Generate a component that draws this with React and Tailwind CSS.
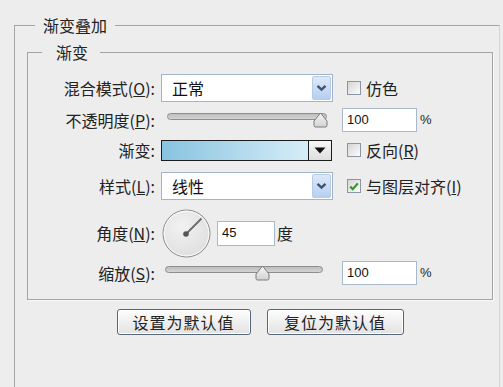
import React from "react";

const CJK = { fontFamily: '"Noto Sans CJK SC", "Noto Sans", sans-serif' };

function Label({ children }) {
  return (
    <div className="w-[127px] shrink-0 text-right text-[16px] leading-[20px] text-[#222]">
      {children}
    </div>
  );
}

function Select({ value }) {
  return (
    <div className="ml-[6px] flex h-[28px] w-[172px] items-center border border-[#a3b4c9] bg-white">
      <div className="flex-1 pl-[10px] text-[16px] leading-[20px] text-[#111]">{value}</div>
      <div className="mr-[1px] flex h-[24px] w-[19px] items-center justify-center rounded-[2px] border border-[#b6cbe6] bg-gradient-to-b from-[#dde9f9] to-[#b7cfef]">
        <svg width="11" height="8" viewBox="0 0 11 8">
          <path d="M1.5 1.8 L5.5 5.6 L9.5 1.8" fill="none" stroke="#3d5477" strokeWidth="2.4" />
        </svg>
      </div>
    </div>
  );
}

function Checkbox({ checked, children, ml = "ml-[14px]" }) {
  return (
    <div className={`${ml} flex items-center`}>
      <div className="flex h-[14px] w-[14px] items-center justify-center border border-[#8a96a6] bg-gradient-to-br from-[#d6d6d6] to-[#fbfbfb]">
        {checked && (
          <svg width="10" height="9" viewBox="0 0 10 9">
            <path d="M1.2 4.6 L3.8 7.2 L8.8 1.4" fill="none" stroke="#2f9a2a" strokeWidth="2.2" />
          </svg>
        )}
      </div>
      <span className="ml-[5px] text-[16px] leading-[20px] text-[#222]">{children}</span>
    </div>
  );
}

function Slider({ ml, width, thumb }) {
  return (
    <div className={`${ml} relative h-[16px] shrink-0`} style={{ width }}>
      <div className="absolute left-0 right-0 top-[1px] h-[7px] rounded-full border border-[#8e8e8e] bg-gradient-to-b from-[#bdbdbd] to-[#d4d4d4]" />
      <svg className="absolute top-0" style={{ left: thumb }} width="15" height="16" viewBox="0 0 15 16">
        <defs>
          <linearGradient id="tg" x1="0" y1="0" x2="0" y2="1">
            <stop offset="0" stopColor="#f6f6f6" />
            <stop offset="1" stopColor="#d2d2d2" />
          </linearGradient>
        </defs>
        <path d="M7.5 1 L14 9 L14 13.5 Q14 15 12.5 15 L2.5 15 Q1 15 1 13.5 L1 9 Z" fill="url(#tg)" stroke="#7c7c7c" strokeWidth="1" />
      </svg>
    </div>
  );
}

function NumInput({ ml, w, h, value }) {
  return (
    <div
      className={`${ml} ${w} ${h} flex shrink-0 items-center border border-[#a9b9cc] bg-white pl-[4px] text-[13px] text-[#111]`}
      style={{ fontFamily: '"Liberation Sans", Arial, sans-serif' }}
    >
      {value}
    </div>
  );
}

function Pct() {
  return (
    <span className="ml-[3px] text-[13px] text-[#222]" style={{ fontFamily: '"Liberation Sans", Arial, sans-serif' }}>
      %
    </span>
  );
}

export default function App() {
  return (
    <div className="h-[387px] w-[503px] overflow-hidden bg-[#ededed]" style={CJK}>
      <fieldset className="ml-[14px] mt-[15px] h-[420px] w-[486px] border-l border-r border-t border-l-[#a4a4a4] border-r-[#d4d4d4] border-t-[#a4a4a4]">
        <legend className="ml-[20px] px-[8px] text-[16px] leading-[20px] text-[#222]">渐变叠加</legend>

        <fieldset className="ml-[12px] mt-[7px] h-[258px] w-[466px] border border-[#a4a4a4] shadow-[1px_1px_0_#fafafa]">
          <legend className="ml-[14px] pl-[14px] pr-[12px] text-[16px] leading-[20px] text-[#222]">渐变</legend>

          <div className="flex flex-col pt-[12px]">
            {/* Row 1 */}
            <div className="flex h-[28px] items-center">
              <Label>混合模式(<u>O</u>):</Label>
              <Select value="正常" />
              <Checkbox>仿色</Checkbox>
            </div>

            {/* Row 2 */}
            <div className="mt-[2px] flex h-[32px] items-center">
              <Label>不透明度(<u>P</u>):</Label>
              <Slider ml="ml-[12px]" width="160px" thumb="146px" />
              <NumInput ml="ml-[15px]" w="w-[75px]" h="h-[24px]" value="100" />
              <Pct />
            </div>

            {/* Row 3 */}
            <div className="flex h-[28px] items-center">
              <Label>渐变:</Label>
              <div className="ml-[6px] flex h-[21px] w-[171px] border border-[#1c1c1c]">
                <div className="flex-1 bg-gradient-to-r from-[#88c3e0] to-[#d6edf8]" />
                <div className="flex w-[23px] items-center justify-center border-l border-[#1c1c1c] bg-gradient-to-b from-[#f7f7f7] to-[#dedede]">
                  <svg width="12" height="7" viewBox="0 0 12 7">
                    <path d="M0.5 0.5 L11.5 0.5 L6 6.5 Z" fill="#111" />
                  </svg>
                </div>
              </div>
              <Checkbox ml="ml-[15px]">
                反向(<u>R</u>)
              </Checkbox>
            </div>

            {/* Row 4 */}
            <div className="flex h-[44px] items-center">
              <Label>样式(<u>L</u>):</Label>
              <Select value="线性" />
              <Checkbox checked>
                与图层对齐(<u>I</u>)
              </Checkbox>
            </div>

            {/* Row 5 */}
            <div className="flex h-[50px] items-center">
              <Label>角度(<u>N</u>):</Label>
              <svg className="ml-[7px] shrink-0" width="49" height="49" viewBox="0 0 49 49">
                <defs>
                  <radialGradient id="cg" cx="0.4" cy="0.35" r="0.7">
                    <stop offset="0" stopColor="#f2f2f2" />
                    <stop offset="1" stopColor="#dedede" />
                  </radialGradient>
                </defs>
                <circle cx="24.5" cy="24.5" r="23.5" fill="url(#cg)" stroke="#8c8c8c" strokeWidth="1" />
                <circle cx="24.5" cy="24.5" r="22.3" fill="none" stroke="#fbfbfb" strokeWidth="1" />
                <line x1="24" y1="25" x2="39.5" y2="9.5" stroke="#6a6a6a" strokeWidth="1.8" />
                <circle cx="24" cy="25" r="2.8" fill="#555" />
              </svg>
              <NumInput ml="ml-[6px]" w="w-[58px]" h="h-[25px]" value="45" />
              <span className="ml-[2px] text-[16px] leading-[20px] text-[#222]">度</span>
            </div>

            {/* Row 6 */}
            <div className="flex h-[30px] items-center">
              <Label>缩放(<u>S</u>):</Label>
              <Slider ml="ml-[10px]" width="158px" thumb="90px" />
              <NumInput ml="ml-[19px]" w="w-[75px]" h="h-[24px]" value="100" />
              <Pct />
            </div>
          </div>
        </fieldset>

        <div className="ml-[12px] mt-[9px] flex w-[466px] justify-center gap-[16px]">
          <button className="h-[26px] w-[134px] rounded-[3px] border border-[#56677a] bg-gradient-to-b from-[#fdfdfd] to-[#e2e2e2] text-[16px] leading-[20px] tracking-[1px] text-[#222] shadow-[inset_0_0_0_1px_#ffffff]">
            设置为默认值
          </button>
          <button className="h-[26px] w-[137px] rounded-[3px] border border-[#56677a] bg-gradient-to-b from-[#fdfdfd] to-[#e2e2e2] text-[16px] leading-[20px] tracking-[1px] text-[#222] shadow-[inset_0_0_0_1px_#ffffff]">
            复位为默认值
          </button>
        </div>
      </fieldset>
    </div>
  );
}
